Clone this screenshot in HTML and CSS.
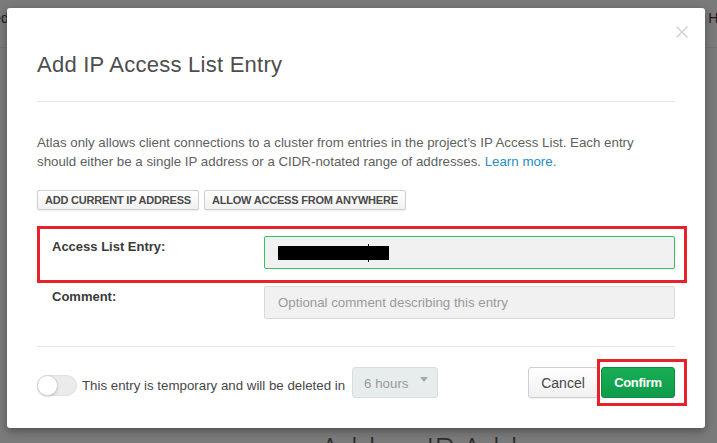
FILE: index.html
```html
<!DOCTYPE html>
<html>
<head>
<meta charset="utf-8">
<link rel="stylesheet" href="styles.css">
</head>
<body>
<div class="page">
  <div class="topnav">
    <span class="nav-left">Connected</span>
    <span class="nav-right">Help</span>
  </div>
  <div class="page-heading">Add an IP Address</div>
</div>

<div class="modal">
  <button class="close" aria-label="Close">
    <svg width="12" height="12" viewBox="0 0 12 12"><path d="M0.5 0.5 L11.5 11.5 M11.5 0.5 L0.5 11.5" stroke="#cfcfcf" stroke-width="1.3" fill="none"/></svg>
  </button>
  <div class="modal-header">
    <h2 class="title">Add IP Access List Entry</h2>
  </div>
  <div class="modal-body">
    <p class="desc">Atlas only allows client connections to a cluster from entries in the project’s IP Access List. Each entry should either be a single IP address or a CIDR-notated range of addresses. <a class="link" href="#">Learn more.</a></p>
    <div class="quick-buttons">
      <button class="btn-small">ADD CURRENT IP ADDRESS</button>
      <button class="btn-small">ALLOW ACCESS FROM ANYWHERE</button>
    </div>
    <div class="form">
      <div class="form-row">
        <label class="form-label">Access List Entry:</label>
        <div class="field field-focus">
          <span class="redacted"></span>
          <span class="cursor"></span>
        </div>
      </div>
      <div class="form-row">
        <label class="form-label">Comment:</label>
        <div class="field"><span class="placeholder">Optional comment describing this entry</span></div>
      </div>
    </div>
  </div>
  <div class="modal-footer">
    <div class="footer-left">
      <span class="toggle"><span class="knob"></span></span>
      <span class="temp-text">This entry is temporary and will be deleted in</span>
      <span class="select"><span class="select-value">6 hours</span><span class="caret"></span></span>
    </div>
    <div class="footer-right">
      <button class="btn btn-default">Cancel</button>
      <button class="btn btn-primary">Confirm</button>
    </div>
  </div>
  <div class="annot annot-entry"></div>
  <div class="annot annot-confirm"></div>
</div>
</body>
</html>
```

FILE: styles.css
```css
html, body {
  margin: 0;
  padding: 0;
}
body {
  width: 717px;
  height: 443px;
  overflow: hidden;
  background: #7a7a7a;
  font-family: "Liberation Sans", Arial, sans-serif;
  position: relative;
}
.page {
  width: 717px;
  height: 443px;
}
.topnav {
  display: flex;
  justify-content: space-between;
  height: 48px;
  box-sizing: border-box;
  border-bottom: 1px solid #707070;
  padding-top: 10px;
  font-size: 14px;
  line-height: 16px;
  color: #1e1a1e;
}
.nav-left {
  margin-left: -59px;
}
.nav-right {
  margin-right: -20px;
}
.page-heading {
  margin-top: 383px;
  padding-left: 320px;
  font-family: Roboto, "Liberation Sans", sans-serif;
  font-weight: 300;
  font-size: 32px;
  line-height: 36px;
  color: #2c2c2c;
  white-space: nowrap;
}

.modal {
  position: absolute;
  left: 7px;
  top: 8px;
  width: 698px;
  background: #fff;
  border-radius: 3px;
  box-shadow: 0 3px 9px rgba(0,0,0,0.35);
}
.close {
  position: absolute;
  top: 18px;
  right: 17px;
  width: 12px;
  height: 12px;
  padding: 0;
  border: 0;
  background: none;
  display: flex;
}
.modal-header {
  margin: 0 30px;
  padding: 45px 0 24px;
  border-bottom: 1px solid #e7e7e7;
}
.title {
  margin: 0;
  font-size: 22px;
  line-height: 24px;
  font-weight: normal;
  letter-spacing: 0.25px;
  color: #4d4d4d;
}
.modal-body {
  padding: 31px 30px 0;
}
.desc {
  margin: 0;
  max-width: 625px;
  font-size: 13.3px;
  line-height: 19px;
  color: #606060;
}
.link {
  color: #1f8dc6;
  text-decoration: none;
}
.quick-buttons {
  display: flex;
  gap: 5px;
  margin-top: 19px;
}
.btn-small {
  height: 20px;
  padding: 0 7px;
  font-family: "Liberation Sans", Arial, sans-serif;
  font-size: 11px;
  font-weight: bold;
  letter-spacing: -0.2px;
  color: #4a4a4a;
  background: linear-gradient(#ffffff, #f1f1f1);
  border: 1px solid #cfcfcf;
  border-radius: 2px;
  box-shadow: 0 1px 1px rgba(0,0,0,0.08);
}
.form {
  margin-top: 26px;
  display: flex;
  flex-direction: column;
  gap: 17px;
}
.form-row {
  display: flex;
  align-items: flex-start;
}
.form-label {
  width: 212px;
  padding-left: 15px;
  font-size: 13px;
  font-weight: bold;
  line-height: 19px;
  padding-top: 1px;
  color: #3a3a3a;
}
.field {
  position: relative;
  flex: 1;
  height: 33px;
  box-sizing: border-box;
  background: #f1f1f1;
  border: 1px solid #dadada;
  border-radius: 2px;
  display: flex;
  align-items: center;
  padding-left: 13px;
}
.field-focus {
  border-color: #33c25e;
}
.redacted {
  display: inline-block;
  width: 111px;
  height: 14px;
  background: #000;
}
.cursor {
  position: absolute;
  left: 103px;
  top: 7px;
  width: 1px;
  height: 18px;
  background: #000;
}
.placeholder {
  font-size: 13.3px;
  color: #9a9a9a;
}
.modal-footer {
  margin: 27px 30px 0;
  padding: 20px 0 30px;
  border-top: 1px solid #e7e7e7;
  display: flex;
  justify-content: space-between;
  align-items: center;
}
.footer-left {
  display: flex;
  align-items: center;
}
.toggle {
  position: relative;
  width: 40px;
  height: 21px;
  box-sizing: border-box;
  margin-top: 6px;
  border-radius: 11px;
  background: #ebebeb;
  border: 1px solid #e0e0e0;
}
.knob {
  position: absolute;
  left: -1px;
  top: -1px;
  width: 21px;
  height: 21px;
  box-sizing: border-box;
  border-radius: 50%;
  background: #fff;
  border: 1px solid #d4d4d4;
  box-shadow: 0 1px 2px rgba(0,0,0,0.15);
}
.temp-text {
  margin-left: 5px;
  margin-top: 6px;
  font-size: 13.3px;
  color: #474747;
}
.select {
  position: relative;
  margin-left: 7px;
  width: 86px;
  height: 31px;
  box-sizing: border-box;
  background: #e7eded;
  border: 1px solid #d7dfdf;
  border-radius: 3px;
  display: flex;
  align-items: center;
  padding-left: 11px;
}
.select-value {
  font-size: 13.3px;
  color: #9a9a9a;
  margin-top: 2px;
}
.caret {
  position: absolute;
  right: 9px;
  top: 9px;
  width: 0;
  height: 0;
  border-left: 4px solid transparent;
  border-right: 4px solid transparent;
  border-top: 5px solid #a7aaaa;
}
.footer-right {
  display: flex;
  gap: 3px;
}
.btn {
  height: 31px;
  box-sizing: border-box;
  border-radius: 3px;
  font-family: "Liberation Sans", Arial, sans-serif;
}
.btn-default {
  width: 70px;
  font-size: 14px;
  color: #464646;
  background: linear-gradient(#ffffff, #f0f0f0);
  border: 1px solid #cfcfcf;
  box-shadow: 0 1px 1px rgba(0,0,0,0.06);
}
.btn-primary {
  width: 74px;
  font-size: 13px;
  font-weight: bold;
  letter-spacing: -0.3px;
  color: #fff;
  background: linear-gradient(#17ad55, #109c4a);
  border: 1px solid #0c8a3f;
}
.annot {
  position: absolute;
  box-sizing: border-box;
  border: 3px solid #e8222a;
}
.annot-entry {
  left: 30px;
  top: 218px;
  width: 650px;
  height: 57px;
}
.annot-confirm {
  left: 590px;
  top: 351px;
  width: 90px;
  height: 47px;
}
```
